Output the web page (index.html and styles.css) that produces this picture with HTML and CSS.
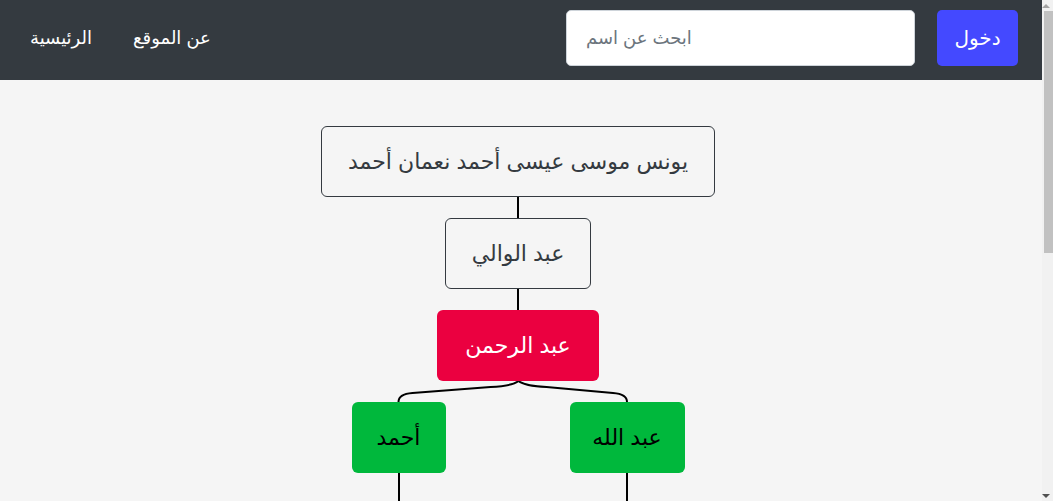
FILE: index.html
```html
<!DOCTYPE html>
<html lang="ar" dir="rtl">
<head>
<meta charset="utf-8">
<title>شجرة العائلة</title>
<link rel="stylesheet" href="styles.css">
</head>
<body>
<div class="page">
  <header class="navbar">
    <div class="nav-actions">
      <button class="btn-login">دخول</button>
      <input class="search" type="text" placeholder="ابحث عن اسم">
    </div>
    <nav class="nav-links">
      <a href="#" class="nav-link">عن الموقع</a>
      <a href="#" class="nav-link">الرئيسية</a>
    </nav>
  </header>
  <main class="content">
    <div class="tree">
      <div class="node node-plain">يونس موسى عيسى أحمد نعمان أحمد</div>
      <div class="vline"></div>
      <div class="node node-plain">عبد الوالي</div>
      <div class="vline"></div>
      <div class="node node-red">عبد الرحمن</div>
      <svg class="branch" width="333" height="21" viewBox="0 0 333 21">
        <path d="M166.5 0 Q172.5 5 194.5 6 L261 12 Q275 13 275 21" />
        <path d="M166.5 0 Q160.5 5 138.5 6 L60.5 12 Q46.5 13 46.5 21" />
      </svg>
      <div class="children">
        <div class="child child-a">
          <div class="node node-green">عبد الله</div>
          <div class="vline vline-long"></div>
        </div>
        <div class="child child-b">
          <div class="node node-green">أحمد</div>
          <div class="vline vline-long"></div>
        </div>
      </div>
    </div>
  </main>
</div>
<div class="fake-scrollbar" aria-hidden="true">
  <div class="sb-arrow sb-up"></div>
  <div class="sb-thumb"></div>
  <div class="sb-arrow sb-down"></div>
</div>
</body>
</html>
```
FILE: styles.css
```css
* { box-sizing: border-box; }
html, body { margin: 0; padding: 0; }
body {
  background: #f5f5f5;
  font-family: Arial, "Liberation Sans", "DejaVu Sans", sans-serif;
  color: #343a40;
  overflow-x: hidden;
}
.page {
  width: 1042px;
  margin-left: 0;
  margin-right: auto;
}
.navbar {
  height: 80px;
  background: #343a40;
  display: flex;
  align-items: flex-start;
  justify-content: space-between;
  padding: 10px 24px 0 30px;
}
.nav-actions {
  display: flex;
  align-items: center;
  gap: 22px;
}
.btn-login {
  height: 56px;
  width: 81px;
  border: none;
  border-radius: 5px;
  background: #4449ff;
  color: #fff;
  font-family: inherit;
  font-size: 20px;
  cursor: pointer;
}
.search {
  width: 349px;
  height: 56px;
  border: 1px solid #ced4da;
  border-radius: 5px;
  background: #fff;
  padding: 0 19px;
  font-family: inherit;
  font-size: 18px;
  direction: ltr;
  text-align: left;
}
.search::placeholder { color: #6c757d; }
.nav-links {
  display: flex;
  align-items: center;
  height: 56px;
  gap: 41px;
}
.nav-link {
  color: #fff;
  text-decoration: none;
  font-size: 18px;
}
.content {
  min-height: 920px;
  padding-top: 46px;
}
.tree {
  display: flex;
  flex-direction: column;
  align-items: center;
  width: 1036px;
  margin-left: 0;
  margin-right: auto;
}
.node {
  height: 71px;
  display: flex;
  align-items: center;
  justify-content: center;
  border-radius: 6px;
  font-size: 22px;
  padding: 0 26px;
  white-space: nowrap;
}
.node-plain {
  border: 1px solid #343a40;
  background: transparent;
  color: #343a40;
}
.node-red {
  background: #eb0040;
  color: #fff;
  width: 162px;
}
.node-green {
  background: #00b83c;
  color: #000;
}
.vline {
  width: 2px;
  height: 21px;
  background: #000;
}
.vline-long { height: 60px; }
.branch { display: block; }
.branch path {
  fill: none;
  stroke: #000;
  stroke-width: 2;
}
.children {
  display: flex;
  gap: 124px;
}
.child {
  display: flex;
  flex-direction: column;
  align-items: center;
}
.child-a .node { width: 115px; }
.child-b .node { width: 94px; }

.fake-scrollbar {
  position: fixed;
  top: 0;
  right: 0;
  width: 11px;
  height: 100vh;
  background: #f1f1f1;
  display: flex;
  flex-direction: column;
  align-items: flex-start;
}
.sb-arrow {
  width: 15px;
  height: 11px;
  flex: none;
  display: flex;
  justify-content: center;
  align-items: center;
}
.sb-up::before {
  content: "";
  border-left: 4px solid transparent;
  border-right: 4px solid transparent;
  border-bottom: 4px solid #a3a3a3;
}
.sb-down {
  margin-top: auto;
}
.sb-down::before {
  content: "";
  border-left: 4px solid transparent;
  border-right: 4px solid transparent;
  border-top: 4px solid #505050;
}
.sb-thumb {
  margin-left: 2px;
  width: 9px;
  height: 242px;
  background: #c1c1c1;
}
```
